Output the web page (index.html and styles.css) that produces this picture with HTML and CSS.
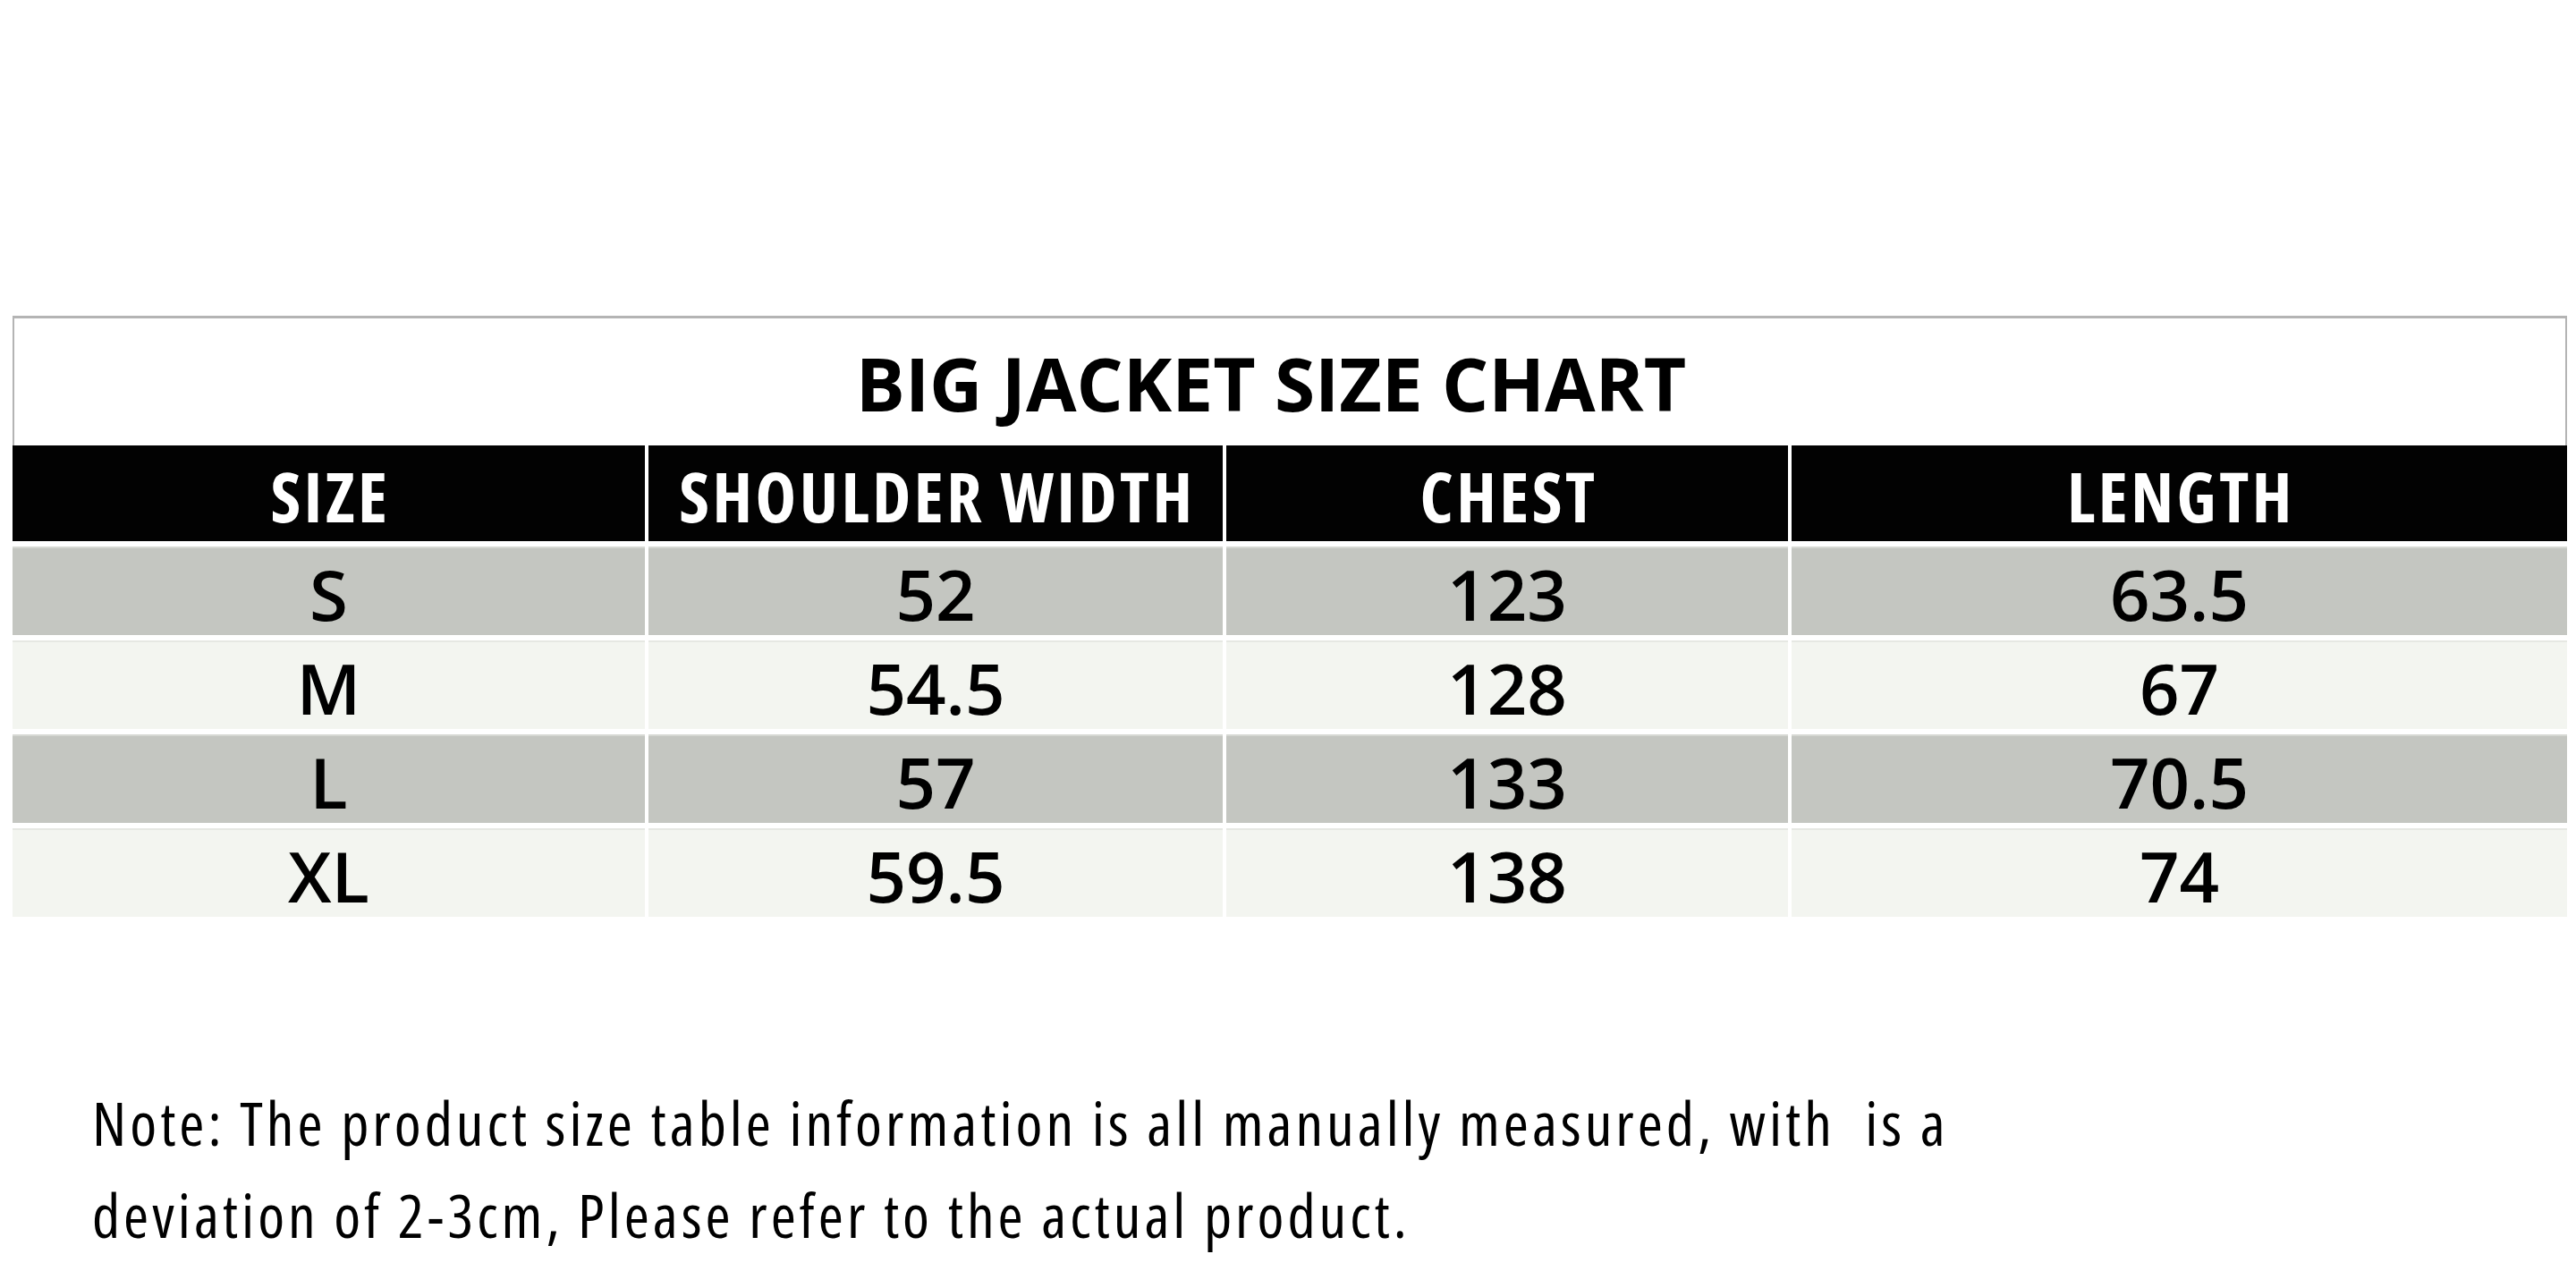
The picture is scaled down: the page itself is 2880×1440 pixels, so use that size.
FILE: index.html
```html
<!DOCTYPE html>
<html lang="en">
<head>
<meta charset="utf-8">
<title>Big Jacket Size Chart</title>
<link rel="stylesheet" href="styles.css">
</head>
<body>
<main class="chart">
  <div class="title-box"><h1 class="title">BIG JACKET SIZE CHART</h1></div>
  <div class="grid">
    <div class="cell head">SIZE</div>
    <div class="cell head">SHOULDER WIDTH</div>
    <div class="cell head">CHEST</div>
    <div class="cell head">LENGTH</div>

    <div class="cell dark">S</div>
    <div class="cell dark">52</div>
    <div class="cell dark">123</div>
    <div class="cell dark">63.5</div>

    <div class="cell light">M</div>
    <div class="cell light">54.5</div>
    <div class="cell light">128</div>
    <div class="cell light">67</div>

    <div class="cell dark">L</div>
    <div class="cell dark">57</div>
    <div class="cell dark">133</div>
    <div class="cell dark">70.5</div>

    <div class="cell light">XL</div>
    <div class="cell light">59.5</div>
    <div class="cell light">138</div>
    <div class="cell light">74</div>
  </div>
</main>
<p class="note">Note: The product size table information is all manually measured, with&nbsp; is a<br>deviation of 2-3cm, Please refer to the actual product.</p>
</body>
</html>
```
FILE: styles.css
```css
html, body {
  margin: 0;
  padding: 0;
  background: #ffffff;
}

body {
  font-family: "Open Sans", "Lato", sans-serif;
  color: #050505;
  width: 2880px;
  height: 1440px;
  overflow: hidden;
}

.chart {
  margin: 353px 0 0 14px;
  width: 2856px;
}

.title-box {
  box-sizing: border-box;
  height: 145px;
  border: 3px solid #b4b4b4;
  border-bottom: 0;
  border-left-width: 2px;
  border-right-width: 2px;
  display: flex;
  align-items: center;
  justify-content: center;
  padding: 2px 42px 0 0;
}

.title {
  margin: 0;
  font-size: 82px;
  font-weight: 700;
  line-height: 1;
  color: #000;
}

.grid {
  display: grid;
  grid-template-columns: 707px 642px 628px 1fr;
  grid-template-rows: 107px repeat(4, 99px);
  column-gap: 4px;
  row-gap: 6px;
}

.cell {
  display: flex;
  align-items: center;
  justify-content: center;
  box-sizing: border-box;
  line-height: 1;
  white-space: nowrap;
}

.head {
  background: #020202;
  color: #ffffff;
  font-size: 77px;
  font-weight: 700;
  font-stretch: 75%;
  letter-spacing: 3.5px;
  padding: 6px 0 0 4px;
}

.dark,
.light {
  font-size: 78px;
  font-weight: 600;
  font-stretch: 95%;
  color: #000;
  padding-top: 5px;
}

.dark {
  background: #c4c6c1;
  border-top: 2px solid #d6d8d3;
}

.light {
  background: #f3f5f0;
  border-top: 2px solid #e6e8e3;
}

.note {
  margin: 178px 0 0 103px;
  font-size: 68px;
  font-weight: 400;
  font-stretch: 75%;
  letter-spacing: 4px;
  line-height: 103px;
  color: #000;
}
```
